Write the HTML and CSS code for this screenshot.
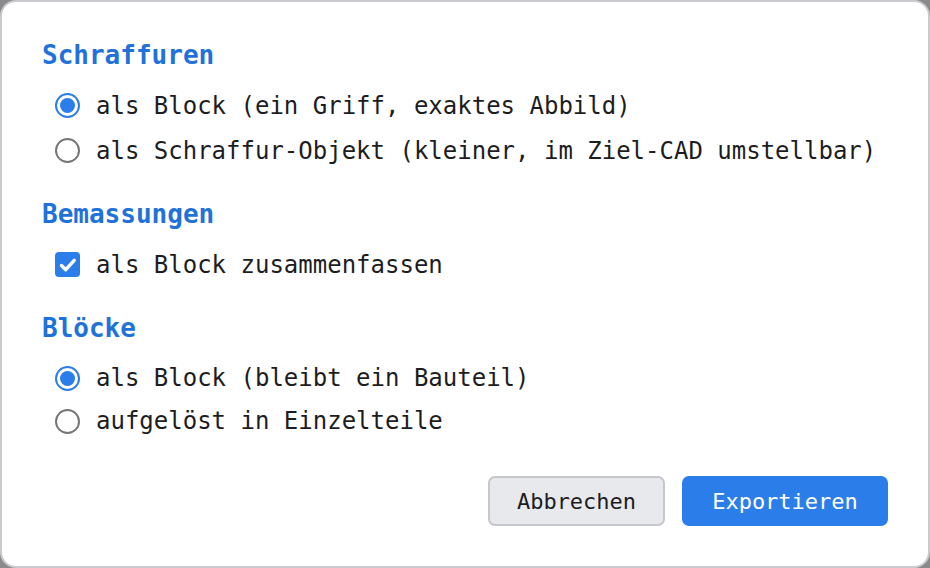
FILE: index.html
```html
<!DOCTYPE html>
<html lang="de">
<head>
<meta charset="utf-8">
<title>Export</title>
<link rel="stylesheet" href="styles.css">
</head>
<body>
<div class="dialog">
  <section class="group">
    <h2 class="group-title">Schraffuren</h2>
    <label class="option"><span class="radio checked"></span><span class="label">als Block (ein Griff, exaktes Abbild)</span></label>
    <label class="option"><span class="radio"></span><span class="label">als Schraffur-Objekt (kleiner, im Ziel-CAD umstellbar)</span></label>
  </section>
  <section class="group">
    <h2 class="group-title">Bemassungen</h2>
    <label class="option"><span class="checkbox"><svg viewBox="0 0 24 24" width="24" height="24"><path d="M5.5 12.5l4.2 4.2 8.5-9.4" fill="none" stroke="#fff" stroke-width="3.4" stroke-linecap="round" stroke-linejoin="round"/></svg></span><span class="label">als Block zusammenfassen</span></label>
  </section>
  <section class="group group-compact">
    <h2 class="group-title">Blöcke</h2>
    <label class="option"><span class="radio checked"></span><span class="label">als Block (bleibt ein Bauteil)</span></label>
    <label class="option"><span class="radio"></span><span class="label">aufgelöst in Einzelteile</span></label>
  </section>
  <div class="actions">
    <button class="btn btn-secondary">Abbrechen</button>
    <button class="btn btn-primary">Exportieren</button>
  </div>
</div>
</body>
</html>
```
FILE: styles.css
```css
html, body {
  margin: 0;
  padding: 0;
  background: #8a8a8c;
}
.dialog {
  box-sizing: border-box;
  width: 930px;
  height: 568px;
  background: #fff;
  border: 2px solid #c9cacd;
  border-radius: 16px;
  padding: 37px 40px 0 40px;
  font-family: "DejaVu Sans Mono", monospace;
  color: #1d1d1f;
  display: flex;
  flex-direction: column;
}
.group {
  display: flex;
  flex-direction: column;
  margin-bottom: 25px;
}
.group-title {
  margin: 0 0 12px 0;
  font-size: 26px;
  line-height: 32px;
  font-weight: bold;
  color: #1f72da;
}
.option {
  display: flex;
  align-items: center;
  height: 45px;
  padding-left: 13px;
  font-size: 24px;
}
.group-compact .option {
  height: 44px;
}
.group-compact .option:last-child {
  margin-top: -1px;
}
.radio {
  box-sizing: border-box;
  width: 25px;
  height: 25px;
  border-radius: 50%;
  border: 2px solid #767676;
  margin-right: 16px;
  flex: none;
  display: flex;
  align-items: center;
  justify-content: center;
}
.radio.checked {
  border-color: #2b7de9;
}
.radio.checked::after {
  content: "";
  width: 15px;
  height: 15px;
  border-radius: 50%;
  background: #2b7de9;
}
.checkbox {
  width: 25px;
  height: 25px;
  border-radius: 4px;
  background: #2b7de9;
  margin-right: 16px;
  flex: none;
  display: flex;
  align-items: center;
  justify-content: center;
}
.checkbox svg {
  display: block;
}
.actions {
  display: flex;
  justify-content: flex-end;
  gap: 17px;
  margin-top: 8px;
  padding-right: 0;
}
.btn {
  font-family: "DejaVu Sans Mono", monospace;
  font-size: 22px;
  height: 50px;
  border-radius: 7px;
  cursor: pointer;
}
.btn-secondary {
  width: 177px;
  background: #e8e9ed;
  border: 2px solid #c5c7cc;
  color: #1d1d1f;
}
.btn-primary {
  width: 206px;
  background: #2b7de9;
  border: 2px solid #2b7de9;
  color: #fff;
}
```
